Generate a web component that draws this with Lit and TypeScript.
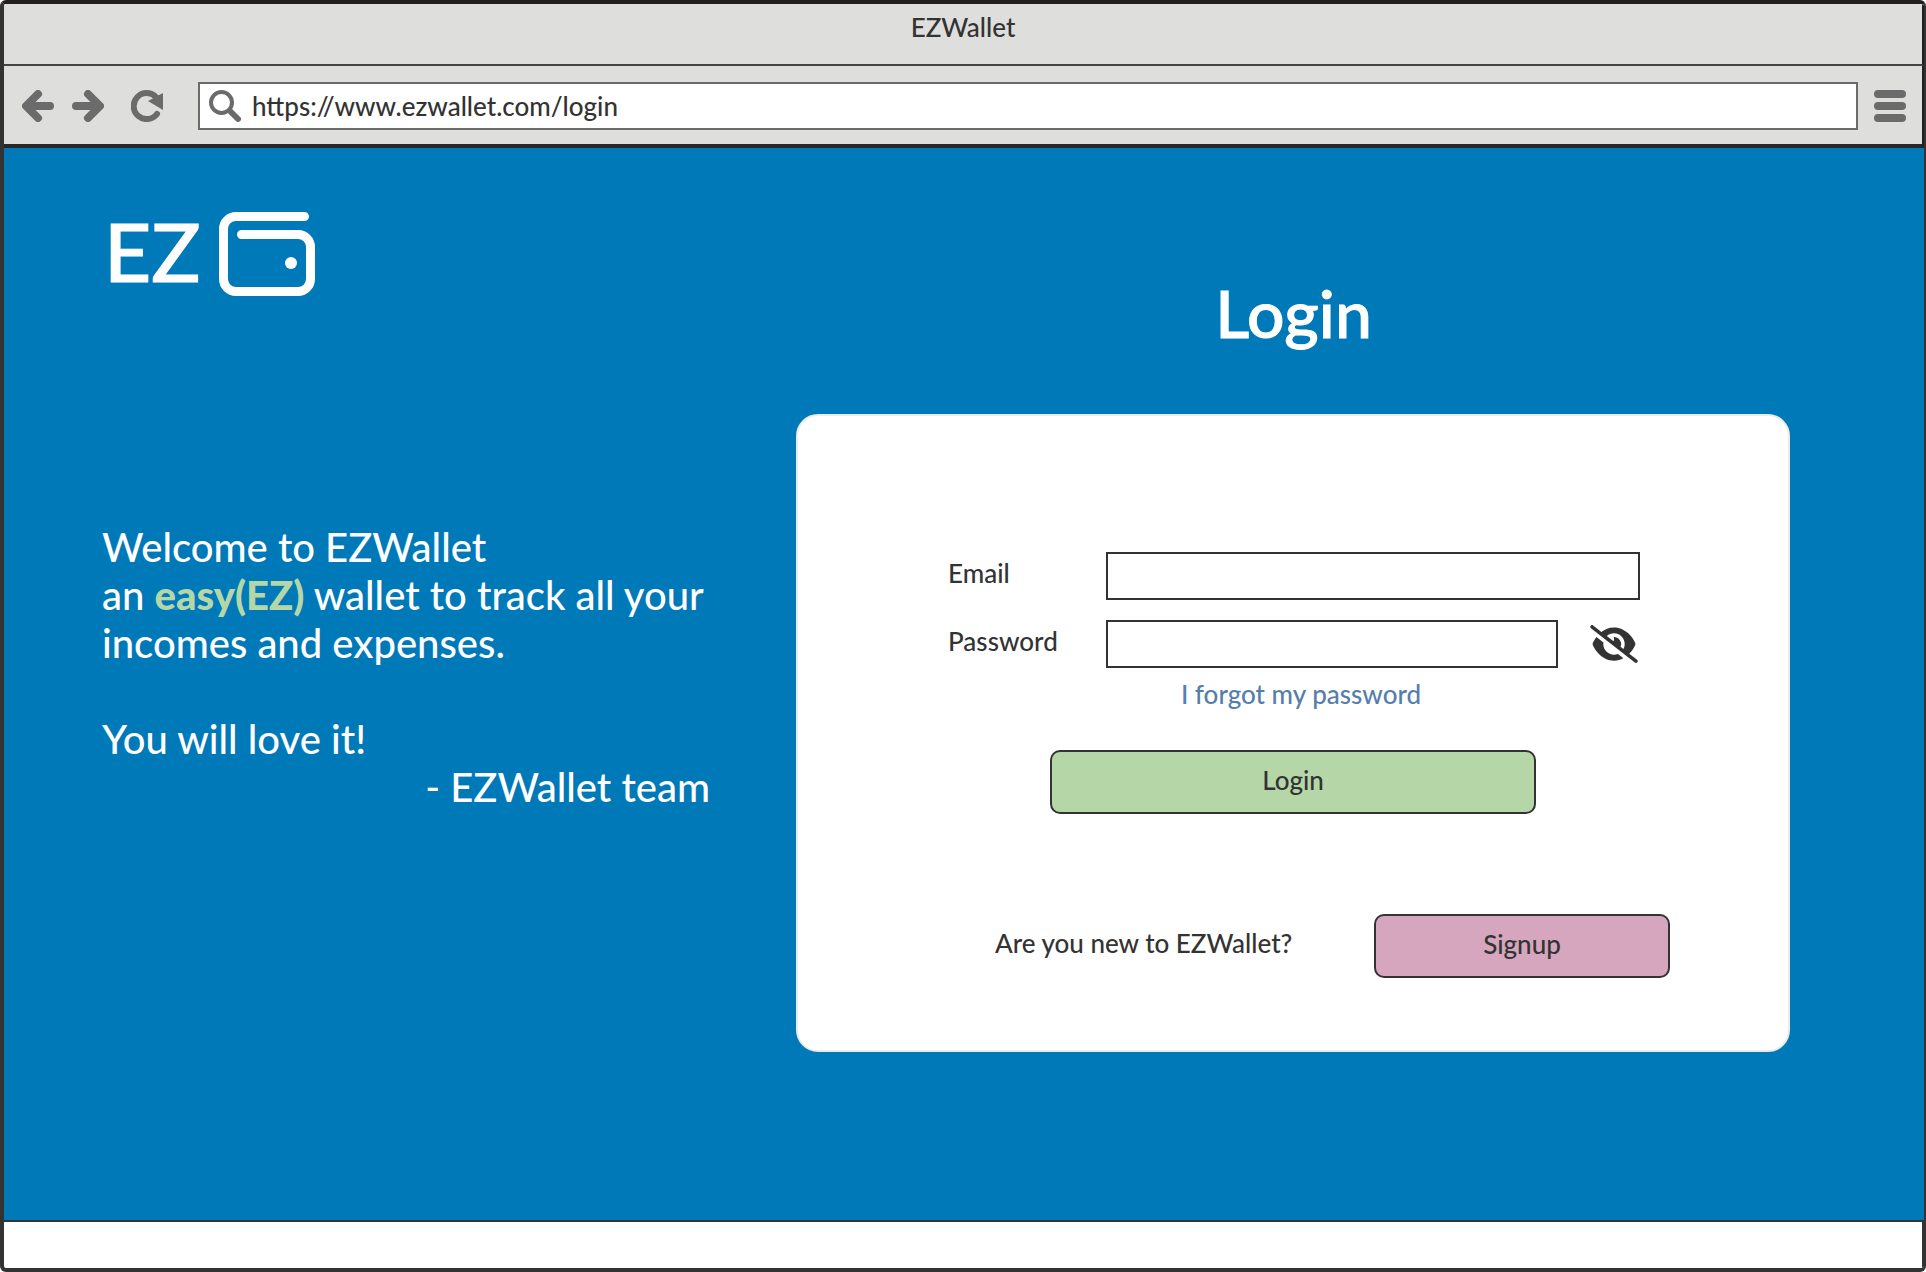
import { LitElement, html, css } from "lit";
import { customElement, state } from "lit/decorators.js";

@customElement("app-root")
export class AppRoot extends LitElement {
  static styles = css`
    :host {
      display: block;
      background: #fff;
      color: #333;
      font-family: Lato, "Open Sans", sans-serif;
      font-size: 26px;
      font-weight: 500;
      line-height: 32px;
    }
    * { box-sizing: border-box; }
    svg { display: block; }
    button, input { font: inherit; color: inherit; }
    .window {
      display: flex;
      flex-direction: column;
      min-height: 100vh;
      overflow: hidden;
      border: 4px solid #333;
      border-top-color: #231f20;
      border-right-width: 2px;
      border-radius: 6px;
    }
    .titlebar {
      height: 62px;
      padding-top: 7px;
      border-right: 2px solid #231f20;
      border-bottom: 2px solid #444;
      background: #dededd;
      text-align: center;
    }
    .toolbar {
      display: flex;
      align-items: center;
      height: 82px;
      padding: 2px 16px 0 18px;
      border-right: 2px solid #231f20;
      border-bottom: 4px solid #2a2728;
      background: #dededd;
      color: #6b6b6b;
    }
    .tool {
      flex: none;
      padding: 0;
      border: 0;
      background: none;
      cursor: pointer;
    }
    .forward { margin-left: 18px; }
    .reload { margin-left: 27px; }
    .address {
      display: flex;
      flex: 1;
      align-items: center;
      gap: 11px;
      min-width: 0;
      height: 48px;
      margin: 0 16px 0 35px;
      padding-left: 9px;
      border: 2px solid #6b6b6b;
      background: #fff;
    }
    .url {
      flex: 1;
      min-width: 0;
      height: 32px;
      padding: 0;
      border: 0;
      outline: 0;
      background: none;
      color: #333;
    }
    .page {
      display: grid;
      flex: 1;
      grid-template-columns: minmax(0, 7fr) minmax(0, 10fr);
      align-items: start;
      padding: 64px 134px 168px 98px;
      background: #0079b9;
      color: #fff;
    }
    .logo {
      display: flex;
      gap: 18px;
      padding-left: 2px;
      font-size: 82px;
      line-height: 76px;
      -webkit-text-stroke: 1px #fff;
    }
    .welcome {
      margin-top: 227px;
      font-size: 40px;
      line-height: 48px;
    }
    .welcome p { margin: 0 0 48px; }
    .welcome .last { margin: 0; }
    .welcome strong { color: #b5d7a8; font-weight: 900; }
    .sign { display: block; width: 608px; max-width: 100%; text-align: right; }
    h1 {
      margin: 61px 0;
      font-size: 66px;
      font-weight: 500;
      line-height: 80px;
      text-align: center;
      -webkit-text-stroke: 1px #fff;
    }
    .card {
      margin-left: -1px;
      border: 2px solid #ebebeb;
      border-radius: 22px;
      padding: 136px 0 72px;
      background: #fff;
      color: #333;
    }
    .fields {
      display: grid;
      grid-template-columns: 158px minmax(0, 1fr);
      row-gap: 20px;
      margin: 0 148px 0 150px;
    }
    .fields label { line-height: 42px; }
    .box {
      width: 100%;
      min-width: 0;
      height: 48px;
      padding: 0 10px;
      border: 2px solid #333;
      border-radius: 0;
      outline: 0;
      background: #fff;
    }
    .secret { display: flex; align-items: center; gap: 32px; padding-right: 2px; }
    .forgot {
      display: block;
      width: max-content;
      margin: 10px auto 40px;
      padding-left: 16px;
      color: #567eac;
      text-decoration: none;
    }
    .btn {
      display: block;
      height: 64px;
      padding: 0 0 4px;
      border: 2px solid #333;
      border-radius: 10px;
      line-height: 32px;
      cursor: pointer;
    }
    .login { width: 49%; margin: 0 auto; background: #b5d7a8; }
    .signup { width: 296px; background: #d5a6bd; }
    .join {
      display: flex;
      justify-content: space-between;
      margin: 100px 118px 0 197px;
      line-height: 58px;
    }
    .statusbar {
      height: 48px;
      border-top: 2px solid #333;
      border-right: 2px solid #333;
    }
  `;

  @state() private visible = false;

  render() {
    return html`
      <div class="window">
        <header class="titlebar">EZWallet</header>
        <nav class="toolbar" aria-label="Browser">
          <button class="tool" aria-label="Back">
            <svg width="32" height="32" viewBox="0 0 32 32" fill="none" stroke="currentColor" stroke-width="8" stroke-linecap="round" stroke-linejoin="round"><path d="M16 4 4 16l12 12M5 16h23"/></svg>
          </button>
          <button class="tool forward" aria-label="Forward">
            <svg width="32" height="32" viewBox="0 0 32 32" fill="none" stroke="currentColor" stroke-width="8" stroke-linecap="round" stroke-linejoin="round"><path d="M16 4l12 12-12 12M27 16H4"/></svg>
          </button>
          <button class="tool reload" aria-label="Reload">
            <svg width="32" height="32" viewBox="0 0 32 32"><path d="M26 24A13 13 0 1 1 25 7" fill="none" stroke="currentColor" stroke-width="6" stroke-linecap="round"/><path d="M32 3v17L17 11z" fill="currentColor"/></svg>
          </button>
          <div class="address">
            <svg width="32" height="32" viewBox="0 0 32 32" fill="none" stroke="currentColor"><circle cx="12.500" cy="12.500" r="10.500" stroke-width="4"/><path d="M21 21l8 8" stroke-width="6" stroke-linecap="round"/></svg>
            <input class="url" type="text" aria-label="Address" value="https://www.ezwallet.com/login" />
          </div>
          <button class="tool" aria-label="Menu">
            <svg width="32" height="32" viewBox="0 0 32 32" fill="currentColor"><rect width="32" height="8" rx="4"/><rect y="12" width="32" height="8" rx="4"/><rect y="24" width="32" height="8" rx="4"/></svg>
          </button>
        </nav>
        <main class="page">
          <section>
            <div class="logo">
              <span>EZ</span>
              <svg width="96" height="84" viewBox="0 0 96 84" fill="none" stroke="#fff" stroke-width="9" stroke-linecap="round" aria-hidden="true"><path d="M85.500 4.500H17A12.500 12.500 0 0 0 4.500 17v50A12.500 12.500 0 0 0 17 79.500h62A12.500 12.500 0 0 0 91.500 67V35A12.500 12.500 0 0 0 79 22.500H22.500"/><circle cx="72" cy="51" r="6" fill="#fff" stroke="none"/></svg>
            </div>
            <div class="welcome">
              <p>Welcome to EZWallet<br />an <strong>easy(EZ)</strong> wallet to track all your<br />incomes and expenses.</p>
              <p class="last">You will love it!<span class="sign">- EZWallet team</span></p>
            </div>
          </section>
          <section>
            <h1>Login</h1>
            <form class="card" @submit=${(e: Event) => e.preventDefault()}>
              <div class="fields">
                <label for="email">Email</label>
                <input class="box" id="email" type="email" />
                <label for="password">Password</label>
                <div class="secret">
                  <input class="box" id="password" type=${this.visible ? "text" : "password"} />
                  <button class="tool" type="button" aria-label="Show password" @click=${() => (this.visible = !this.visible)}>
                    <svg width="48" height="38" viewBox="0 0 640 512" fill="#333"><path d="M38.800 5.100C28.400-3.100 13.300-1.200 5.100 9.200S-1.200 34.700 9.200 42.900l592 464c10.400 8.200 25.500 6.300 33.700-4.100s6.300-25.500-4.100-33.700L525.600 386.700c39.600-40.600 66.400-86.100 79.900-118.400c3.300-7.900 3.300-16.700 0-24.600c-14.900-35.700-46.200-87.700-93-131.100C465.500 68.800 400.800 32 320 32c-68.200 0-125 26.300-169.300 60.800L38.800 5.100zM223.100 149.500C248.600 126.200 282.700 112 320 112c79.500 0 144 64.500 144 144c0 24.900-6.300 48.300-17.400 68.700L408 294.500c8.400-19.300 10.600-41.400 4.800-63.300c-11.100-41.500-47.800-69.400-88.600-71.100c-5.800-.2-9.200 6.100-7.400 11.700c2.100 6.400 3.300 13.200 3.300 20.300c0 10.200-2.400 19.800-6.600 28.300l-90.300-70.800zM373 389.900c-16.400 6.500-34.300 10.100-53 10.100c-79.500 0-144-64.500-144-144c0-6.900 .5-13.600 1.400-20.200L83.100 161.500C60.300 191.200 44 220.800 34.500 243.700c-3.300 7.900-3.300 16.700 0 24.600c14.900 35.700 46.200 87.700 93 131.100C174.500 443.200 239.200 480 320 480c47.800 0 89.900-12.900 126.200-32.500L373 389.900z"/></svg>
                  </button>
                </div>
              </div>
              <a class="forgot" href="#forgot">I forgot my password</a>
              <button class="btn login" type="submit">Login</button>
              <div class="join">
                <span>Are you new to EZWallet?</span>
                <button class="btn signup" type="button">Signup</button>
              </div>
            </form>
          </section>
        </main>
        <footer class="statusbar"></footer>
      </div>
    `;
  }
}
